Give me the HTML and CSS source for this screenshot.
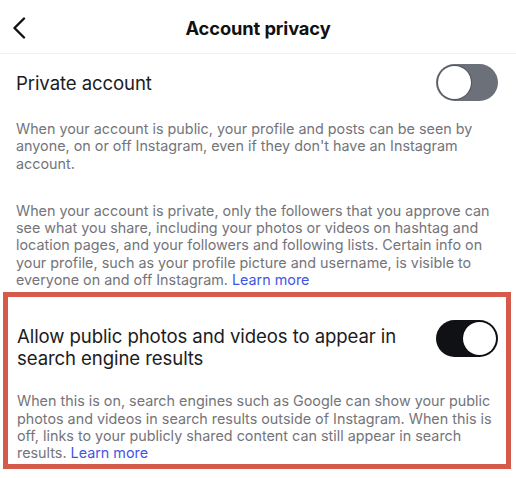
FILE: index.html
```html
<!DOCTYPE html>
<html>
<head>
<meta charset="utf-8">
<link rel="stylesheet" href="styles.css">
</head>
<body>
<div class="page">
  <header class="header">
    <button class="back" aria-label="Back">
      <svg width="14" height="22" viewBox="0 0 14 22"><path d="M12 1.5 L2.5 11 L12 20.5" fill="none" stroke="#111" stroke-width="2.4" stroke-linecap="round" stroke-linejoin="round"/></svg>
    </button>
    <h1 class="title">Account privacy</h1>
  </header>

  <section class="setting">
    <div class="row">
      <span class="label">Private account</span>
      <span class="toggle off"><span class="knob"></span></span>
    </div>
    <p class="desc first">When your account is public, your profile and posts can be seen by anyone, on or off Instagram, even if they don't have an Instagram account.</p>
    <p class="desc second">When your account is private, only the followers that you approve can see what you share, including your photos or videos on hashtag and location pages, and your followers and following lists. Certain info on your profile, such as your profile picture and username, is visible to everyone on and off Instagram. <a class="link">Learn more</a></p>
  </section>

  <section class="highlight">
    <div class="row top">
      <span class="label">Allow public photos and videos to appear in search engine results</span>
      <span class="toggle on"><span class="knob"></span></span>
    </div>
    <p class="desc third">When this is on, search engines such as Google can show your public photos and videos in search results outside of Instagram. When this is off, links to your publicly shared content can still appear in search results. <a class="link">Learn more</a></p>
  </section>
</div>
</body>
</html>
```
FILE: styles.css
```css
* { box-sizing: border-box; }
html, body { margin: 0; padding: 0; background: #fff; }
body { font-family: Inter, "Noto Sans", sans-serif; color: #1c1c1e; }
.page { width: 516px; }

.header {
  position: relative;
  height: 54px;
  display: flex;
  align-items: center;
  justify-content: center;
  border-bottom: 1px solid #f2f2f2;
  padding-top: 3px;
}
.back {
  position: absolute;
  left: 11px;
  top: 16px;
  border: 0;
  background: none;
  padding: 0;
  width: 16px;
  height: 24px;
  display: flex;
  align-items: center;
  justify-content: center;
}
.title {
  margin: 0;
  font-size: 18.3px;
  font-weight: 700;
  letter-spacing: -0.1px;
  color: #111;
}

.setting { padding: 10px 18px 0 16px; }
.row {
  display: flex;
  align-items: center;
  justify-content: space-between;
  gap: 20px;
}
.label {
  font-size: 18.6px;
  line-height: 22px;
  color: #1c1c1e;
  letter-spacing: -0.1px;
}

.toggle {
  flex: none;
  position: relative;
  width: 62px;
  height: 37px;
  border-radius: 19px;
  display: block;
}
.toggle.off { background: #6c7079; }
.toggle.on { background: #0f1115; }
.knob {
  position: absolute;
  top: 2px;
  width: 33px;
  height: 33px;
  border-radius: 50%;
  background: #fff;
  box-shadow: 0 0 0 1px rgba(0,0,0,0.25);
}
.toggle.off .knob { left: 2px; }
.toggle.on .knob { right: 2px; }

.desc {
  margin: 0;
  font-size: 14.35px;
  line-height: 17.3px;
  color: #74747a;
}
.desc.first { margin-top: 19px; }
.desc.second { margin-top: 30px; }
.link { color: #3f55e6; }

.highlight {
  margin: 4px 5px 0 3px;
  border: 5px solid #d65a4c;
  padding: 23px 8px 2px 9px;
}
.row.top { align-items: flex-start; }
.row.top .label { margin-top: 5px; }
.desc.third { margin-top: 23px; }
```
